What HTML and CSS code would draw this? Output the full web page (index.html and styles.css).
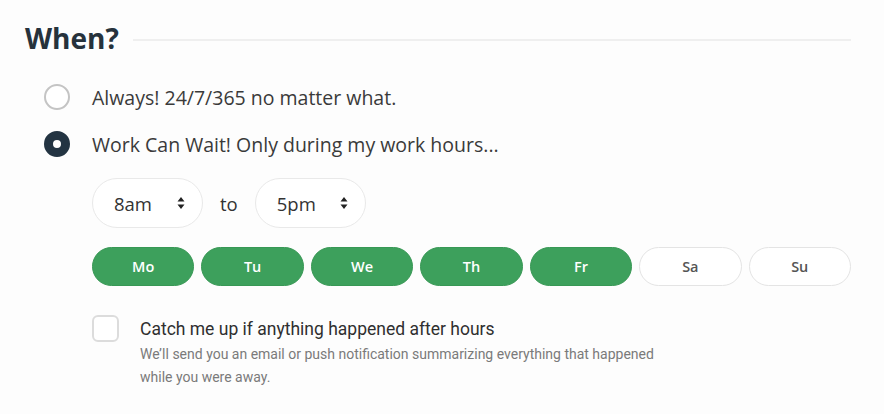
FILE: index.html
```html
<!DOCTYPE html>
<html lang="en">
<head>
  <meta charset="UTF-8" />
  <title>When?</title>
  <link rel="stylesheet" href="styles.css">
</head>
<body>
  <div class="container">
    <div class="section-head">
      <h2>When?</h2>
      <span class="rule"></span>
    </div>

    <label class="radio-row">
      <span class="radio"></span>
      <span>Always! 24/7/365 no matter what.</span>
    </label>

    <label class="radio-row">
      <span class="radio checked"></span>
      <span>Work Can Wait! Only during my work hours...</span>
    </label>

    <div class="hours">
      <div class="time-row">
        <div class="select">
          <span>8am</span>
          <svg class="arrows" width="8" height="14" viewBox="0 0 8 14"><path d="M4 1 L7.5 5.5 H0.5 Z M4 13 L7.5 8.5 H0.5 Z" fill="#222"/></svg>
        </div>
        <span class="to">to</span>
        <div class="select">
          <span>5pm</span>
          <svg class="arrows" width="8" height="14" viewBox="0 0 8 14"><path d="M4 1 L7.5 5.5 H0.5 Z M4 13 L7.5 8.5 H0.5 Z" fill="#222"/></svg>
        </div>
      </div>

      <div class="days">
        <button class="day on">Mo</button>
        <button class="day on">Tu</button>
        <button class="day on">We</button>
        <button class="day on">Th</button>
        <button class="day on">Fr</button>
        <button class="day">Sa</button>
        <button class="day">Su</button>
      </div>

      <label class="check-row">
        <span class="checkbox"></span>
        <span class="check-text">
          <span class="check-title">Catch me up if anything happened after hours</span>
          <span class="check-desc">We’ll send you an email or push notification summarizing everything that happened while you were away.</span>
        </span>
      </label>
    </div>
  </div>
</body>
</html>
```

FILE: styles.css
```css
* {
  box-sizing: border-box;
  margin: 0;
  padding: 0;
}

body {
  font-family: "Open Sans", "Liberation Sans", sans-serif;
  background-color: #fdfdfd;
  color: #333;
}

.container {
  width: 851px;
  padding: 22px 0 0 25px;
}

.section-head {
  display: flex;
  align-items: center;
  gap: 14px;
  margin-bottom: 30px;
}

h2 {
  font-size: 28px;
  font-weight: 700;
  color: #26323c;
  line-height: 32px;
}

.rule {
  flex: 1;
  height: 2px;
  background-color: #efefef;
  margin-top: 4px;
}

.radio-row {
  display: flex;
  align-items: center;
  gap: 22px;
  margin-left: 19px;
  height: 26px;
  margin-bottom: 21px;
  font-size: 19.5px;
  color: #3a3a3a;
}

.radio {
  width: 26px;
  height: 26px;
  border-radius: 50%;
  border: 2px solid #c4c4c4;
  background-color: #fff;
  flex-shrink: 0;
}

.radio.checked {
  border: 9px solid #233442;
}

.hours {
  margin-left: 67px;
}

.time-row {
  display: flex;
  align-items: center;
  gap: 17px;
  margin-top: 14px;
}

.select {
  display: flex;
  align-items: center;
  justify-content: space-between;
  width: 111px;
  height: 50px;
  padding: 0 17px 0 21px;
  border: 1px solid #e9e9e9;
  border-radius: 25px;
  background-color: #fff;
  font-size: 18.5px;
  color: #333;
}

.to {
  font-size: 18.5px;
  color: #333;
}

.days {
  display: flex;
  gap: 7px;
  margin-top: 19px;
}

.day {
  width: 103px;
  height: 39px;
  border-radius: 20px;
  border: 1px solid #e4e4e4;
  background-color: #fff;
  font-family: inherit;
  font-size: 14.5px;
  font-weight: 600;
  color: #555;
}

.day.on {
  background-color: #3da05c;
  border-color: #389855;
  color: #fff;
}

.check-row {
  display: flex;
  align-items: flex-start;
  gap: 21px;
  margin-top: 29px;
  font-family: Roboto, "Liberation Sans", sans-serif;
}

.checkbox {
  width: 27px;
  height: 27px;
  border: 2px solid #dcdcdc;
  border-radius: 6px;
  background-color: #fff;
  flex-shrink: 0;
}

.check-text {
  display: flex;
  flex-direction: column;
}

.check-title {
  font-size: 17.5px;
  line-height: 28px;
  color: #2f2f2f;
}

.check-desc {
  font-size: 14px;
  line-height: 23px;
  color: #7a7a7a;
  max-width: 540px;
}
```
